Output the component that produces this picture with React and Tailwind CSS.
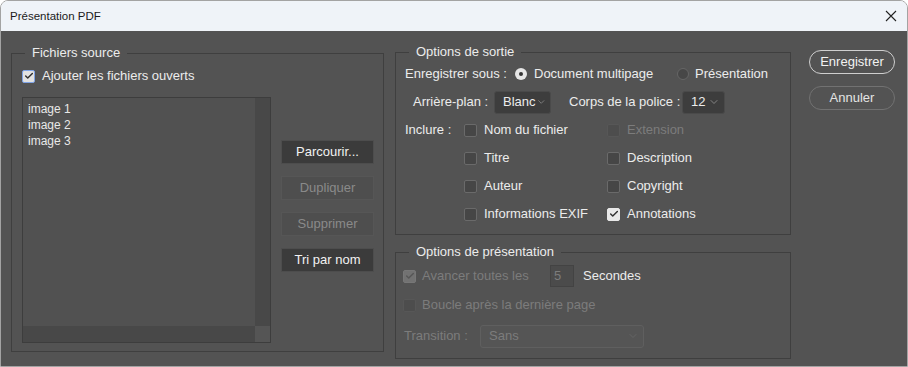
import { Check, ChevronDown } from 'lucide-react';

const font = { fontFamily: '"Liberation Sans", Arial, sans-serif' };

function Box({ checked, disabled, focus }) {
  let cls = 'border-[#6a6a6a] bg-[#464646]';
  if (checked && focus) cls = 'border-[#7fa3e6] bg-[#e2e2e2]';
  else if (checked && disabled) cls = 'border-[#777] bg-[#727272]';
  else if (checked) cls = 'border-[#e8e8e8] bg-[#e8e8e8]';
  else if (disabled) cls = 'border-[#575757] bg-[#4d4d4d]';
  return (
    <span className={`w-[13px] h-[13px] shrink-0 rounded-[2px] border grid place-items-center ${cls}`}>
      {checked && (
        <Check size={10} strokeWidth={3.5} className={disabled ? 'text-[#575757]' : 'text-[#333]'} />
      )}
    </span>
  );
}

function CheckItem({ label, checked, disabled }) {
  return (
    <div className="flex items-center gap-[7px]">
      <Box checked={checked} disabled={disabled} />
      <span className={disabled ? 'text-[#7c7c7c]' : 'text-[#ececec]'}>{label}</span>
    </div>
  );
}

function Radio({ checked }) {
  return checked ? (
    <span className="w-[12px] h-[12px] rounded-full bg-[#e6e6e6] grid place-items-center">
      <span className="w-[4px] h-[4px] rounded-full bg-[#333]" />
    </span>
  ) : (
    <span className="w-[12px] h-[12px] rounded-full bg-[#474747] border border-[#666]" />
  );
}

function Select({ value, width, disabled }) {
  return (
    <div
      className={`h-[23px] rounded-[3px] border flex items-center justify-between pl-[8px] pr-[4px] ${width} ${
        disabled ? 'border-[#5f5f5f] bg-[#555] text-[#7c7c7c]' : 'border-[#4a4a4a] bg-[#3d3d3d] text-[#ececec]'
      }`}
    >
      <span>{value}</span>
      <ChevronDown size={12} strokeWidth={1.3} className={disabled ? 'text-[#6c6c6c]' : 'text-[#a8a8a8]'} />
    </div>
  );
}

function Button({ children, disabled }) {
  return (
    <div
      className={`w-[93px] h-[24px] border grid place-items-center ${
        disabled ? 'bg-[#4e4e4e] border-[#565656] text-[#8a8a8a]' : 'bg-[#3b3b3b] border-[#4d4d4d] text-[#f2f2f2]'
      }`}
    >
      {children}
    </div>
  );
}

// fieldset padding would shift the legend, so the inset lives on an inner div
function Group({ title, className, inner, children }) {
  return (
    <fieldset className={`border border-[#3f3f3f] ${className}`}>
      <legend className="ml-[13px] px-[7px] leading-[16px] text-[#ececec]">{title}</legend>
      <div className={inner}>{children}</div>
    </fieldset>
  );
}

export default function App() {
  return (
    <div
      style={font}
      className="w-[908px] h-[367px] flex flex-col border border-[#a3a3a3] rounded-t-[8px] overflow-hidden text-[13px] leading-[16px]"
    >
      <div className="h-[30px] shrink-0 bg-[#eff3f8] flex items-center justify-between pl-[9px] pr-[9px]">
        <span className="text-[11.5px] text-[#1b1b1b]">Présentation PDF</span>
        <svg width="12" height="12" viewBox="0 0 12 12" className="mr-[1px]">
          <path d="M1 1L11 11M11 1L1 11" stroke="#222" strokeWidth="1.1" />
        </svg>
      </div>

      <div className="flex-1 bg-[#535353] flex items-start pl-[10px]">
        <Group title="Fichiers source" className="w-[373px] h-[307px] mt-[14px]" inner="pl-[10px]">
          <div className="h-[30px] flex items-center gap-[7px]">
            <Box checked focus />
            <span className="text-[#ececec]">Ajouter les fichiers ouverts</span>
          </div>
          <div className="flex mt-[6px]">
            <div className="w-[249px] h-[246px] border border-[#3d3d3d] bg-[#515151] flex flex-col">
              <div className="flex flex-1">
                <div className="flex-1 pl-[5px] pt-[3px] text-[12px] text-[#e8e8e8]">
                  <div className="h-[16px]">image 1</div>
                  <div className="h-[16px]">image 2</div>
                  <div className="h-[16px]">image 3</div>
                </div>
                <div className="w-[15px] bg-[#484848]" />
              </div>
              <div className="flex h-[16px]">
                <div className="flex-1 bg-[#484848]" />
                <div className="w-[15px] bg-[#555]" />
              </div>
            </div>
            <div className="ml-[10px] mt-[43px] flex flex-col gap-[12px]">
              <Button>Parcourir...</Button>
              <Button disabled>Dupliquer</Button>
              <Button disabled>Supprimer</Button>
              <Button>Tri par nom</Button>
            </div>
          </div>
        </Group>

        <div className="ml-[11px] mt-[13px] w-[396px] flex flex-col gap-[9px]">
          <Group title="Options de sortie" className="h-[191px] text-[#ececec]" inner="pl-[9px]">
            <div className="h-[28px] flex items-center">
              <span className="w-[110px]">Enregistrer sous :</span>
              <div className="w-[162px] flex items-center gap-[7px]">
                <Radio checked />
                <span>Document multipage</span>
              </div>
              <div className="flex items-center gap-[6px]">
                <Radio />
                <span>Présentation</span>
              </div>
            </div>
            <div className="h-[28px] flex items-center pl-[8px]">
              <span className="w-[81px]">Arrière-plan :</span>
              <Select value="Blanc" width="w-[57px]" />
              <span className="ml-[18px] w-[113px]">Corps de la police :</span>
              <Select value="12" width="w-[43px]" />
            </div>
            <div className="grid grid-cols-[59px_143px_1fr] auto-rows-[28px] items-center">
              <span>Inclure :</span>
              <CheckItem label="Nom du fichier" />
              <CheckItem label="Extension" disabled />
              <span />
              <CheckItem label="Titre" />
              <CheckItem label="Description" />
              <span />
              <CheckItem label="Auteur" />
              <CheckItem label="Copyright" />
              <span />
              <CheckItem label="Informations EXIF" />
              <CheckItem label="Annotations" checked />
            </div>
          </Group>

          <Group title="Options de présentation" className="h-[115px] text-[#7c7c7c]" inner="pl-[7px]">
            <div className="h-[32px] flex items-center">
              <div className="w-[147px] flex items-center gap-[6px]">
                <Box checked disabled />
                <span>Avancer toutes les</span>
              </div>
              <div className="w-[24px] h-[22px] bg-[#4b4b4b] border border-[#434343] pl-[3px] flex items-center">5</div>
              <span className="ml-[9px] text-[#ececec]">Secondes</span>
            </div>
            <div className="h-[26px] flex items-center gap-[6px]">
              <Box disabled />
              <span>Boucle après la dernière page</span>
            </div>
            <div className="h-[36px] flex items-center pl-[1px]">
              <span className="w-[76px]">Transition :</span>
              <Select value="Sans" width="w-[164px]" disabled />
            </div>
          </Group>
        </div>

        <div className="ml-[18px] mt-[19px] flex flex-col gap-[12px]">
          <div className="w-[86px] h-[24px] rounded-full border-[1.5px] border-[#cfcfcf] grid place-items-center text-[#f2f2f2]">
            Enregistrer
          </div>
          <div className="w-[86px] h-[24px] rounded-full border-[1.5px] border-[#727272] grid place-items-center text-[#e4e4e4]">
            Annuler
          </div>
        </div>
      </div>
    </div>
  );
}
